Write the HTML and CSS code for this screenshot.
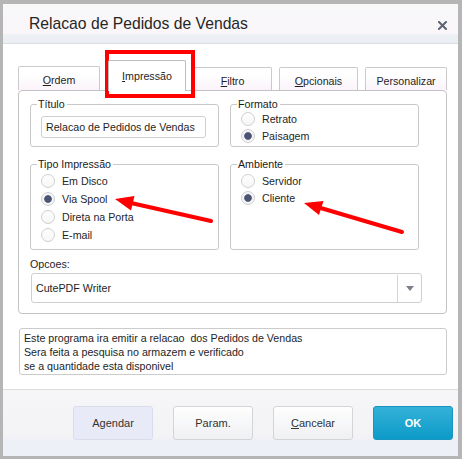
FILE: index.html
```html
<!DOCTYPE html>
<html lang="pt">
<head>
  <meta charset="UTF-8" />
  <title>Relacao de Pedidos de Vendas</title>
  <meta name="viewport" content="width=device-width, initial-scale=1" />
  <link rel="stylesheet" href="styles.css">
</head>
<body>
  <div class="dialog">
    <div class="titlebar">
      <span class="title">Relacao de Pedidos de Vendas</span>
      <svg class="close" width="9" height="9" viewBox="0 0 9 9">
        <path d="M1 1 L8 8 M8 1 L1 8" stroke="#5b6475" stroke-width="2" stroke-linecap="square" />
      </svg>
    </div>

    <div class="content">
      <div class="tabs">
        <div class="tab tab-ordem"><u>O</u>rdem</div>
        <div class="tab tab-active"><u>I</u>mpressão</div>
        <div class="tab tab-filtro"><u>F</u>iltro</div>
        <div class="tab tab-opc"><u>O</u>pcionais</div>
        <div class="tab tab-pers">Personalizar</div>
      </div>

      <div class="panel">
        <div class="row">
          <fieldset class="group">
            <legend>Título</legend>
            <div class="field">Relacao de Pedidos de Vendas</div>
          </fieldset>
          <fieldset class="group">
            <legend>Formato</legend>
            <div class="radios">
              <label class="radio"><input type="radio" name="formato" />Retrato</label>
              <label class="radio"><input type="radio" name="formato" checked />Paisagem</label>
            </div>
          </fieldset>
        </div>

        <div class="row row-second">
          <fieldset class="group">
            <legend>Tipo Impressão</legend>
            <div class="radios radios-loose">
              <label class="radio"><input type="radio" name="tipo" />Em Disco</label>
              <label class="radio"><input type="radio" name="tipo" checked />Via Spool</label>
              <label class="radio"><input type="radio" name="tipo" />Direta na Porta</label>
              <label class="radio"><input type="radio" name="tipo" />E-mail</label>
            </div>
          </fieldset>
          <fieldset class="group">
            <legend>Ambiente</legend>
            <div class="radios radios-low">
              <label class="radio"><input type="radio" name="amb" />Servidor</label>
              <label class="radio"><input type="radio" name="amb" checked />Cliente</label>
            </div>
          </fieldset>
        </div>

        <div class="opt-label">Opcoes:</div>
        <div class="combo">
          <span class="combo-text">CutePDF Writer</span>
          <span class="combo-btn">
            <svg width="8" height="5" viewBox="0 0 8 5"><path d="M0 0 H8 L4 5 Z" fill="#7b808c" /></svg>
          </span>
        </div>
      </div>

      <div class="desc">
        Este programa ira emitir a relacao&nbsp; dos Pedidos de Vendas<br>
        Sera feita a pesquisa no armazem e verificado<br>
        se a quantidade esta disponivel
      </div>
    </div>

    <div class="footer">
      <button class="btn btn-soft">Agendar</button>
      <button class="btn">Param.</button>
      <button class="btn"><u>C</u>ancelar</button>
      <button class="btn btn-ok">OK</button>
    </div>
  </div>

  <!-- red marks drawn over the screenshot -->
  <svg class="marks" width="462" height="459" viewBox="0 0 462 459">
    <rect x="107" y="52" width="86" height="44" fill="none" stroke="#ff0000" stroke-width="4" />
    <line x1="211" y1="221" x2="131" y2="203" stroke="#ff0000" stroke-width="4" stroke-linecap="round" />
    <polygon points="115,199 134.5,196 131,210.5" fill="#ff0000" />
    <line x1="402" y1="232" x2="319" y2="207.5" stroke="#ff0000" stroke-width="4" stroke-linecap="round" />
    <polygon points="304,203 323.5,201 319,215" fill="#ff0000" />
  </svg>
</body>
</html>
```

FILE: styles.css
```css
body {
  margin: 0;
  background: #b5b5b5;
  font-family: "Liberation Sans", Arial, sans-serif;
  font-size: 10.67px;
  color: #1e1e1e;
  width: 462px;
  height: 459px;
  overflow: hidden;
  position: relative;
}
.dialog {
  margin: 4px 0 0 3px;
  width: 455px;
  height: 452px;
  background: #fff;
  display: flex;
  flex-direction: column;
}
.titlebar {
  box-sizing: border-box;
  height: 40px;
  padding: 0 11px 0 26px;
  display: flex;
  align-items: center;
  justify-content: space-between;
  background: linear-gradient(#f8f8f9 0%, #faf6f9 76%, #edf0f5 78%, #ebeef3 100%);
  border-bottom: 1px solid #dadde4;
}
.title {
  font-size: 15.7px;
  color: #262626;
  padding-top: 1px;
}
.close { display: block; margin-top: 3px; }

.content {
  padding: 16px 11px 0 15px;
}
.tabs {
  display: flex;
  align-items: flex-end;
  height: 30px;
}
.tab {
  box-sizing: border-box;
  height: 24px;
  border: 1px solid #cacaca;
  border-bottom: none;
  border-radius: 2px 2px 0 0;
  background: linear-gradient(#ffffff 30%, #fbf3fa 100%);
  display: flex;
  align-items: center;
  justify-content: center;
  padding-top: 2px;
  margin-right: 7px;
}
.tab u { text-underline-offset: 1px; }
.tab-ordem { width: 82px; margin-right: 8px; }
.tab-active {
  width: 78px;
  height: 31px;
  margin-bottom: -1px;
  background: #fff;
  position: relative;
  z-index: 1;
  border-color: #bdbdbd;
  padding-top: 0;
}
.tab-filtro { width: 79px; padding-top: 3px; height: 23px; }
.tab-opc { width: 79px; padding-top: 3px; height: 23px; }
.tab-pers { width: 82px; margin-right: 0; padding-top: 3px; height: 23px; }

.panel {
  border: 1px solid #c3c3c3;
  border-radius: 4px;
  padding: 7px 27px 10px 11px;
}
.row {
  display: flex;
  gap: 11px;
}
.row-second { margin-top: 11px; }
.group {
  box-sizing: border-box;
  flex: 1;
  min-width: 0;
  margin: 0;
  padding: 0 0 2px 10px;
  border: 1px solid #c9c9c9;
  border-radius: 3px;
}
.group legend {
  margin-left: -4px;
  padding: 0 2px 0 1px;
  line-height: 12px;
  color: #1a1a1a;
}
.field {
  box-sizing: border-box;
  height: 22px;
  margin: 6px 12px 5px 0;
  padding-left: 4px;
  border: 1px solid #cfcfcf;
  border-radius: 3px;
  display: flex;
  align-items: center;
}
.radios {
  display: flex;
  flex-direction: column;
}
.radios-loose { padding-top: 2px; padding-bottom: 3px; }
.radios-loose .radio { height: 18px; }
.radios-low { padding-top: 2px; }
.radio {
  height: 17px;
  display: flex;
  align-items: center;
  color: #262626;
}
.radio input {
  appearance: none;
  -webkit-appearance: none;
  box-sizing: border-box;
  width: 14px;
  height: 14px;
  margin: 0 7px 0 0;
  border: 1px solid #cfcfcf;
  border-radius: 50%;
  background: linear-gradient(#ffffff, #f6f6f6);
}
.radio input:checked {
  background: radial-gradient(circle, #4b5573 0, #4b5573 3.4px, #f2f2f4 4.2px, #fbfbfb 100%);
}

.opt-label {
  margin-top: 7px;
  line-height: 14px;
}
.combo {
  box-sizing: border-box;
  height: 30px;
  margin: 2px -3px 0 1px;
  border: 1px solid #cfcfcf;
  border-radius: 3px;
  display: flex;
  align-items: center;
}
.combo-text {
  flex: 1;
  padding-left: 4px;
}
.combo-btn {
  width: 23px;
  height: 26px;
  border-left: 1px solid #d5d5d5;
  display: flex;
  align-items: center;
  justify-content: center;
  padding-top: 1px;
}

.desc {
  box-sizing: border-box;
  height: 47px;
  margin: 14px 0 0 1px;
  padding: 2px 4px;
  border: 1px solid #cbcbcb;
  border-radius: 3px;
  line-height: 14px;
}

.footer {
  box-sizing: border-box;
  margin-top: auto;
  height: 67px;
  border-top: 1px solid #dcdcdc;
  background: linear-gradient(#f6f6f8, #f3f3f6 70%, #edf0f7 78%, #edf0f7);
  display: flex;
  justify-content: flex-end;
  align-items: flex-start;
  gap: 20px;
  padding: 16px 5px 0 0;
}
.btn {
  width: 80px;
  height: 34px;
  font-family: inherit;
  font-size: 11px;
  color: #333;
  border: 1px solid #d3d4d8;
  border-radius: 3px;
  background: linear-gradient(#fefefe, #eff0f2);
  padding: 0;
}
.btn-soft {
  background: #e8ebf7;
  border-color: #d9dceb;
}
.btn-ok {
  background: linear-gradient(#33b1d8, #0d9bc8);
  border-color: #1a95c0;
  color: #fff;
  font-weight: bold;
}

.marks {
  position: absolute;
  top: 0;
  left: 0;
  pointer-events: none;
}
```
